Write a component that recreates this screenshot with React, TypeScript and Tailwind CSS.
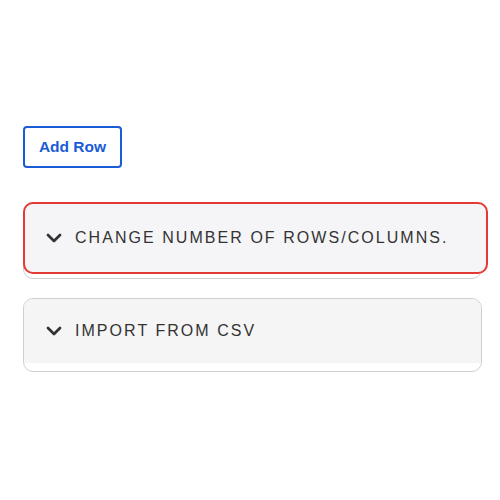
import React from "react";
import { ChevronDown } from "lucide-react";

const font = { fontFamily: '"Liberation Sans", Arial, sans-serif' };

export default function App() {
  return (
    <div className="min-h-[500px] w-[500px] bg-white pl-[23px] pt-[126px]" style={font}>
      <button className="flex h-[42px] w-[99px] items-center justify-center rounded-[4px] border-2 border-[#1a5bd6] text-[15.5px] font-bold text-[#1a5bd6]">
        Add Row
      </button>

      {/* focused accordion */}
      <div className="mt-[34px] w-[459px] rounded-[10px] border border-[#cfcfcf] bg-white pb-[4px]">
        <button className="-ml-px -mt-px flex h-[72px] w-[465px] items-center gap-[9px] rounded-[10px] border-2 border-[#e53935] bg-[#f5f5f7] pl-[17px] text-left">
          <ChevronDown size={24} strokeWidth={2.75} className="text-[#333]" />
          <span className="text-[16px] tracking-[2.05px] text-[#333]">CHANGE NUMBER OF ROWS/COLUMNS.</span>
        </button>
      </div>

      <div className="mt-[19px] w-[459px] overflow-hidden rounded-[10px] border border-[#cfcfcf] bg-white pb-[8px]">
        <button className="flex h-[64px] w-full items-center gap-[9px] bg-[#f5f5f5] pl-[18px] text-left">
          <ChevronDown size={24} strokeWidth={2.75} className="text-[#333]" />
          <span className="text-[16px] tracking-[2.05px] text-[#333]">IMPORT FROM CSV</span>
        </button>
      </div>
    </div>
  );
}
